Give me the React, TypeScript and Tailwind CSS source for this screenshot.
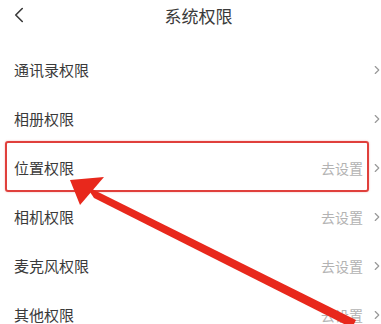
import { ChevronLeft, ChevronRight } from "lucide-react"

const rows = [
	{ name: "通讯录权限", action: "" },
	{ name: "相册权限", action: "" },
	{ name: "位置权限", action: "去设置" },
	{ name: "相机权限", action: "去设置" },
	{ name: "麦克风权限", action: "去设置" },
	{ name: "其他权限", action: "去设置" },
]

export default function App() {
	return (
		<div
			className="relative w-[381px] h-[324px] overflow-hidden bg-white text-[#3a3a3a]"
			style={{ fontFamily: '"Noto Sans CJK SC", "Noto Sans", sans-serif' }}
		>
			{/* Header */}
			<div className="relative h-[30px] flex items-center justify-center pl-[16px]">
				<ChevronLeft className="absolute left-[6px] top-[2px] w-[26px] h-[26px] text-[#3a3a3a]" strokeWidth={1.5} />
				<span className="text-[17px] leading-none">系统权限</span>
			</div>

			{/* List */}
			<div className="mt-[15px] flex flex-col">
				{rows.map((row) => (
					<div key={row.name} className="h-[49px] flex items-center pl-[14px]">
						<span className="text-[15px] leading-none">{row.name}</span>
						<div className="ml-auto flex items-center gap-[7px] mr-[-3px]">
							{row.action && <span className="text-[14px] leading-none text-[#b3b3b3]">{row.action}</span>}
							<ChevronRight className="w-[14px] h-[14px] text-[#999]" strokeWidth={2} />
						</div>
					</div>
				))}
			</div>

			{/* Highlight box around 位置权限 */}
			<div className="absolute left-[5px] top-[141px] w-[364px] h-[51px] rounded-[3px] border-2 border-[#e0403c] shadow-[0_0_2px_rgba(224,64,60,0.4)]" />

			{/* Arrow */}
			<svg className="absolute left-0 top-0" width="381" height="324" viewBox="0 0 381 324">
				<polygon points="86,186 94,198 352,328 356,320" fill="#e8281c" />
				<polygon points="70,180 104,177 80,205" fill="#e8281c" />
			</svg>
		</div>
	)
}
